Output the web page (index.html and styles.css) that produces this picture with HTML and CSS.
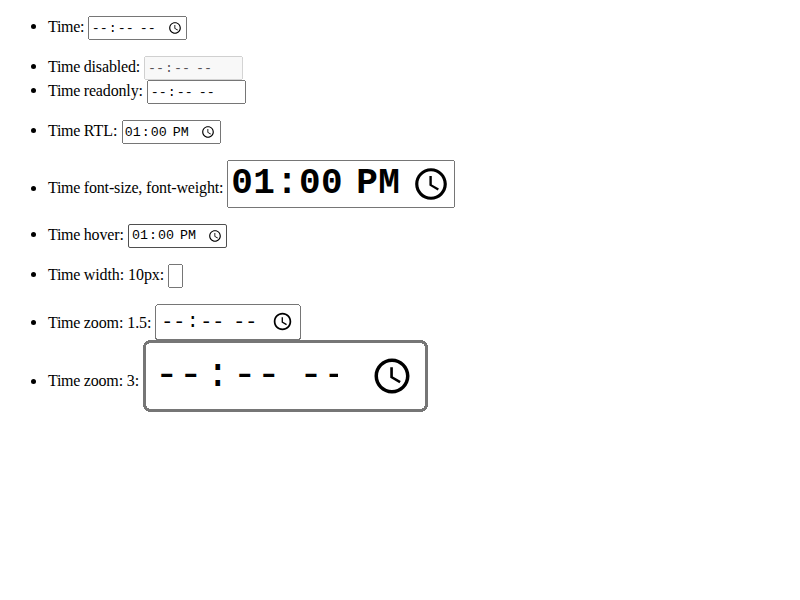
FILE: index.html
```html
<!DOCTYPE html>
<html lang="en">
<head>
<meta charset="utf-8">
<title>Time inputs</title>
<link rel="stylesheet" href="styles.css">
</head>
<body>
<ul>
<li><span class="word">Time: </span><input type="time"></li>
</ul>
<ul>
<li><span class="word">Time </span>disabled: <input type="time" disabled></li>
<li><span class="word">Time </span>readonly: <input type="time" readonly></li>
</ul>
<ul>
<li class="short"><span class="word">Time </span>RTL: <input type="time" value="13:00"></li>
</ul>
<ul>
<li><span class="word">Time </span>font-size, font-weight: <input class="large" type="time" value="13:00"></li>
</ul>
<ul>
<li><span class="word">Time </span>hover: <input class="hover" type="time" value="13:00"></li>
</ul>
<ul>
<li class="wide"><span class="word">Time </span>width: 10px: <input class="narrow" type="time"></li>
</ul>
<ul>
<li class="wide"><span class="word">Time </span>zoom: 1.5: <input class="zoom-medium" type="time"></li>
<li><span class="word">Time </span>zoom: 3: <input class="zoom-large" type="time"></li>
</ul>
</body>
</html>
```
FILE: styles.css
```css
body {
  margin: 0 8px;
  font-family: "Liberation Serif", serif;
  letter-spacing: -0.15px;
}

ul {
  list-style: none;
}

li::before {
  content: "";
  display: inline-block;
  width: 5px;
  height: 5px;
  margin: 0 12px 0 -17px;
  border-radius: 50%;
  background: #000;
  vertical-align: 2.4px;
}

.wide {
  letter-spacing: -0.08px;
}

.short {
  letter-spacing: 0.02px;
}

.short input {
  box-sizing: border-box;
  width: 99.2px;
  padding-left: 0.3px;
  padding-right: 0.6px;
}

.word {
  letter-spacing: -0.3px;
}

input {
  font-family: "Liberation Mono", monospace;
}

.large {
  font-size: 36px;
  font-weight: bold;
  letter-spacing: 0.36px;
}

.hover {
  box-sizing: border-box;
  width: 99px;
  height: 24px;
  padding: 1px 1px 1px 2.5px;
  border: 1px solid #4f4f4f;
  border-radius: 2px;
}

.narrow {
  width: 10px;
}

.zoom-medium {
  zoom: 1.5;
  box-sizing: border-box;
  width: 96.9px;
}

.zoom-large {
  zoom: 3;
  box-sizing: border-box;
  width: 94.9px;
  vertical-align: -0.1px;
}
```
